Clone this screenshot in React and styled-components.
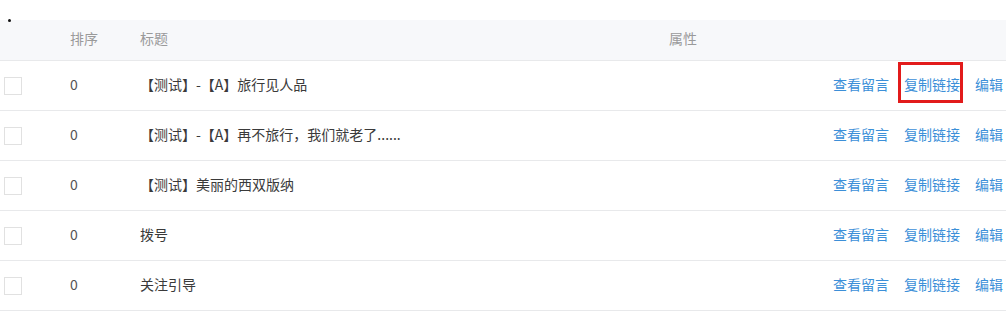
import React from 'react';
import styled, { createGlobalStyle } from 'styled-components';

const GlobalStyle = createGlobalStyle`
  body {
    margin: 0;
    background: #fff;
    font-family: "Noto Sans CJK SC", "Noto Sans", sans-serif;
    font-size: 14px;
    color: #3a3a3a;
  }
`;

const Page = styled.div`
  width: 1006px;
  overflow: hidden;
`;

const Top = styled.div`
  height: 20px;
  position: relative;
`;

const Dot = styled.span`
  position: absolute;
  left: 8px;
  bottom: -2px;
  width: 3px;
  height: 3px;
  border-radius: 50%;
  background: #111;
  z-index: 1;
`;

const HeadRow = styled.div`
  display: flex;
  align-items: center;
  height: 36px;
  padding-bottom: 4px;
  background: #f7f8fa;
  border-bottom: 1px solid #e8e9eb;
  color: #9a9a9a;
`;

const Row = styled.div`
  display: flex;
  align-items: center;
  height: 45px;
  padding-bottom: 4px;
  border-bottom: 1px solid #e8e9eb;
`;

const CheckCell = styled.div`
  width: 66px;
  padding-left: 4px;
  display: flex;
  align-items: center;
`;

const Box = styled.span`
  width: 16px;
  height: 16px;
  border: 1px solid #e1e1e1;
  background: #fff;
  margin-top: 4px;
`;

const SortCell = styled.div`
  width: 70px;
  color: ${(p) => (p.$head ? '#9a9a9a' : '#555')};
`;

const TitleCell = styled.div`
  width: 529px;
  white-space: nowrap;
`;

const AttrCell = styled.div`
  flex: 1;
`;

const Actions = styled.div`
  display: flex;
  gap: 15px;
  padding-right: 3px;
  white-space: nowrap;
`;

const Link = styled.a`
  color: #3c8fd8;
  text-decoration: none;
  cursor: pointer;
  position: relative;
`;

const Highlight = styled.span`
  position: absolute;
  left: -6px;
  right: -3px;
  top: -12px;
  bottom: -9px;
  border: 3px solid #e21b1b;
`;

const rows = [
  '【测试】-【A】旅行见人品',
  '【测试】-【A】再不旅行，我们就老了......',
  '【测试】美丽的西双版纳',
  '拨号',
  '关注引导',
];

export default function App() {
  return (
    <Page>
      <GlobalStyle />
      <Top>
        <Dot />
      </Top>
      <HeadRow>
        <CheckCell />
        <SortCell $head>排序</SortCell>
        <TitleCell>标题</TitleCell>
        <AttrCell>属性</AttrCell>
      </HeadRow>
      {rows.map((title, i) => (
        <Row key={i}>
          <CheckCell>
            <Box />
          </CheckCell>
          <SortCell>0</SortCell>
          <TitleCell>{title}</TitleCell>
          <AttrCell />
          <Actions>
            <Link>查看留言</Link>
            <Link>
              复制链接
              {i === 0 && <Highlight />}
            </Link>
            <Link>编辑</Link>
          </Actions>
        </Row>
      ))}
    </Page>
  );
}
